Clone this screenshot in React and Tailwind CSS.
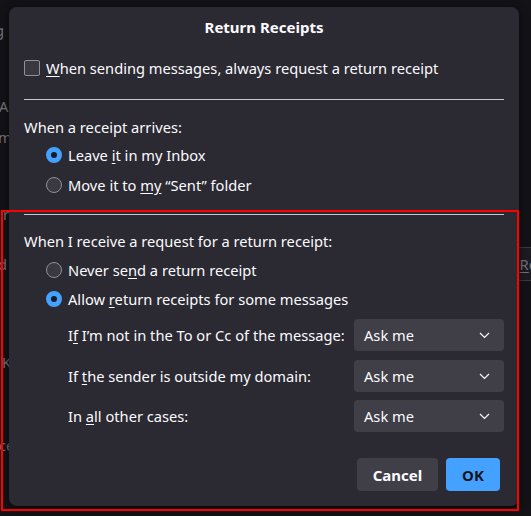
import React from "react";

function Radio({ checked }) {
  return checked ? (
    <span className="w-4 h-4 shrink-0 rounded-full border-[5px] border-[#45a1ff] bg-[#1c1b22]" />
  ) : (
    <span className="w-4 h-4 shrink-0 rounded-full border border-[#8f8f9d] bg-[#3a3941]" />
  );
}

function Select() {
  return (
    <div className="w-[150px] h-8 rounded bg-[#403f47] flex items-center justify-between pl-[10px] pr-[14px]">
      <span>Ask me</span>
      <svg width="11" height="7" viewBox="0 0 11 7" fill="none">
        <path d="M1 1l4.5 4.5L10 1" stroke="#fbfbfe" strokeWidth="1.2" />
      </svg>
    </div>
  );
}

const rows = [
  { pre: "I", key: "f", post: " I’m not in the To or Cc of the message:", mt: "mt-[10px]" },
  { pre: "If ", key: "t", post: "he sender is outside my domain:", mt: "mt-[9px]" },
  { pre: "In ", key: "a", post: "ll other cases:", mt: "mt-[8px]" },
];

export default function App() {
  return (
    <div
      className="relative w-[531px] h-[516px] overflow-hidden bg-[#131217] text-[14.67px] text-[#fbfbfe]"
      style={{ fontFamily: '"Noto Sans", "Open Sans", sans-serif' }}
    >
      {/* background app, mostly hidden */}
      <div className="flex h-full text-[#74737a]">
        <div className="w-[30px] flex flex-col">
          <span className="mt-[20px] -ml-[5px] leading-5">g</span>
          <span className="mt-[56px] -ml-[1px] leading-5">A</span>
          <span className="mt-[11px] -ml-[2px] leading-5">me</span>
          <span className="mt-[57px] ml-[3px] leading-5">r</span>
          <span className="mt-[30px] -ml-[2px] leading-5">d</span>
          <span className="mt-[78px] ml-[2px] leading-5">K</span>
          <span className="mt-[63px] -ml-[1px] leading-5">ce</span>
        </div>
        <div className="flex-1 flex flex-col">
          <div className="h-[247px]" />
          <div className="h-[34px] border-t border-b border-[#3a3940] bg-[#1c1b22] flex items-center justify-end">
            <span className="mr-[-6px]">
              <u className="underline-offset-2">R</u>e
            </span>
          </div>
        </div>
      </div>

      {/* dialog */}
      <div className="absolute left-[9px] top-[7px] w-[510px] h-[499px] rounded-lg bg-[#2b2a33] shadow-[0_2px_8px_rgba(0,0,0,0.6)] px-[15px] flex flex-col leading-5">
        <h1 className="mt-[10px] h-5 text-center text-[15px] font-bold">Return Receipts</h1>

        <div className="mt-[21px] h-5 flex items-center gap-[6px]">
          <span className="w-4 h-4 rounded-[2px] border border-[#8f8f9d] bg-[#3a3941]" />
          <span>
            <u className="underline-offset-2">W</u>hen sending messages, always request a return receipt
          </span>
        </div>

        <div className="mt-[21px] h-px bg-[#c7c7cf]" />

        <div className="mt-[17px] h-5">When a receipt arrives:</div>
        <div className="mt-[8px] h-5 flex items-center gap-[6px] pl-[22px]">
          <Radio checked />
          <span>
            Leave <u className="underline-offset-2">i</u>t in my Inbox
          </span>
        </div>
        <div className="mt-[10px] h-5 flex items-center gap-[6px] pl-[22px]">
          <Radio />
          <span>
            Move it to <u className="underline-offset-2">my</u> “Sent” folder
          </span>
        </div>

        <div className="mt-[19px] h-px bg-[#c7c7cf]" />

        <div className="mt-[16px] h-5">When I receive a request for a return receipt:</div>
        <div className="mt-[9px] h-5 flex items-center gap-[6px] pl-[22px]">
          <Radio />
          <span>
            Never se<u className="underline-offset-2">n</u>d a return receipt
          </span>
        </div>
        <div className="mt-[9px] h-5 flex items-center gap-[6px] pl-[22px]">
          <Radio checked />
          <span>
            Allow <u className="underline-offset-2">r</u>eturn receipts for some messages
          </span>
        </div>

        {rows.map((r, i) => (
          <div key={i} className={`${r.mt} flex items-center justify-between pl-[44px]`}>
            <span>
              {r.pre}
              <u className="underline-offset-2">{r.key}</u>
              {r.post}
            </span>
            <Select />
          </div>
        ))}

        <div className="mt-[26px] mr-[4px] flex justify-end gap-2 text-[15px] font-bold">
          <button className="w-[81px] h-[33px] rounded bg-[#403f47] text-[#fbfbfe]">Cancel</button>
          <button className="w-[54px] h-[33px] rounded bg-[#45a1ff] text-[#15141a]">OK</button>
        </div>
      </div>

      {/* annotation */}
      <div className="absolute left-px top-[210px] w-[518px] h-[301px] border-2 border-[#ff0000] pointer-events-none" />
    </div>
  );
}
